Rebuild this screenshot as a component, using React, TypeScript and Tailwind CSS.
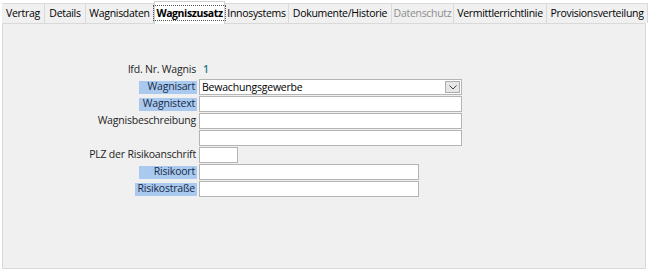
import React from "react";

const tabs = [
  { label: "Vertrag", w: 43 },
  { label: "Details", w: 41 },
  { label: "Wagnisdaten", w: 68 },
  { label: "Wagniszusatz", w: 71, active: true },
  { label: "Innosystems", w: 64 },
  { label: "Dokumente/Historie", w: 103 },
  { label: "Datenschutz", w: 62, disabled: true },
  { label: "Vermittlerrichtlinie", w: 93 },
  { label: "Provisionsverteilung", w: 101 },
];

function Label({ text, hl }: { text: string; hl?: boolean }) {
  return (
    <div className="w-[196px] shrink-0 flex justify-end pr-[2px]">
      {hl ? (
        <div className="min-w-[58px] h-[13px] bg-[#a9caee] flex items-center justify-end pl-[2px] pr-[2px] text-[#1a2a4a]">
          {text}
        </div>
      ) : (
        <div className="pr-[1px]">{text}</div>
      )}
    </div>
  );
}

function Input({ w }: { w: number }) {
  return (
    <div
      className="h-[16px] shrink-0 bg-white border border-[#b4b4b4]"
      style={{ width: w }}
    />
  );
}

export default function App() {
  return (
    <div
      className="w-[648px] h-[273px] bg-white text-[10.5px] tracking-[-0.2px] text-[#1e1e1e] relative overflow-hidden"
      style={{ fontFamily: '"Open Sans", "Noto Sans", sans-serif' }}
    >
      <div className="flex h-[23px] pl-[2px] items-end">
        {tabs.map((t) =>
          t.active ? (
            <div
              key={t.label}
              className="h-[23px] shrink-0 bg-white border border-b-0 border-[#d0d0d0] flex items-center justify-center relative z-10 -mb-px whitespace-nowrap"
              style={{ width: t.w }}
            >
              <div className="px-[2px] border border-dotted border-[#555] font-bold leading-[14px] text-black tracking-[-0.4px]">
                {t.label}
              </div>
            </div>
          ) : (
            <div
              key={t.label}
              className={`h-[20px] shrink-0 bg-[#f0f0f0] border border-b-0 border-l-0 border-[#dadada] flex items-center justify-center whitespace-nowrap tracking-[-0.3px] ${
                t.disabled ? "text-[#8d8d8d]" : "text-black"
              }`}
              style={{ width: t.w }}
            >
              {t.label}
            </div>
          )
        )}
      </div>
      <div className="mx-[2px] h-[246px] bg-[#f0f0f0] border border-[#d9d9d9] pt-[39px] flex flex-col gap-[1px]">
        <div className="flex items-center h-[14px] mb-[1px]">
          <Label text="lfd. Nr. Wagnis" />
          <div className="pl-[4px] text-[#2c7a8a] font-semibold">1</div>
        </div>
        <div className="flex items-center h-[16px]">
          <Label text="Wagnisart" hl />
          <div className="w-[263px] h-[16px] bg-white border border-[#b4b4b4] flex items-center justify-between pl-[2px] pr-[1px]">
            <span className="text-black leading-none">Bewachungsgewerbe</span>
            <div className="w-[15px] h-[12px] bg-[#e6e6e6] border border-[#adadad] flex items-center justify-center">
              <svg width="8" height="5" viewBox="0 0 8 5">
                <path d="M0.5 0.5 L4 4 L7.5 0.5" fill="none" stroke="#444" strokeWidth="1" />
              </svg>
            </div>
          </div>
        </div>
        <div className="flex items-center h-[16px]">
          <Label text="Wagnistext" hl />
          <Input w={263} />
        </div>
        <div className="flex items-center h-[16px]">
          <Label text="Wagnisbeschreibung" />
          <Input w={263} />
        </div>
        <div className="flex items-center h-[16px]">
          <div className="w-[196px] shrink-0" />
          <Input w={263} />
        </div>
        <div className="flex items-center h-[16px]">
          <Label text="PLZ der Risikoanschrift" />
          <Input w={39} />
        </div>
        <div className="flex items-center h-[16px]">
          <Label text="Risikoort" hl />
          <Input w={220} />
        </div>
        <div className="flex items-center h-[16px]">
          <Label text="Risikostraße" hl />
          <Input w={220} />
        </div>
      </div>
    </div>
  );
}
